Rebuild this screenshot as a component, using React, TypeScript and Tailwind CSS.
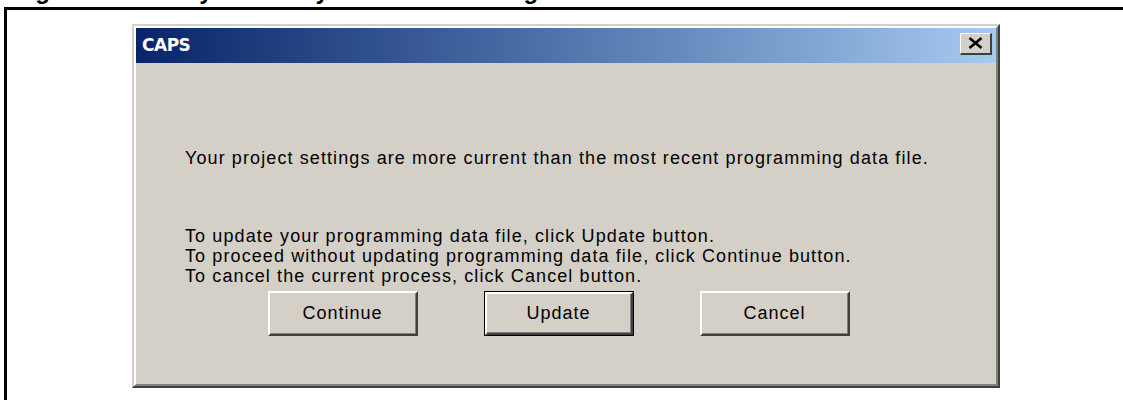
import React from 'react'

// Classic 3D push button used across the dialog
function DialogButton({ label, isDefault = false }: { label: string; isDefault?: boolean }) {
  const face = (
    <div className="w-full h-full border-t-[2px] border-l-[2px] border-t-white border-l-white border-r-[2px] border-b-[2px] border-r-[#404040] border-b-[#404040]">
      <div className="w-full h-full border-r-[1px] border-b-[1px] border-r-[#808080] border-b-[#808080] flex items-center justify-center text-black">
        {label}
      </div>
    </div>
  )

  if (isDefault) {
    return <div className="w-[150px] h-[45px] border-[1px] border-black bg-[#d4d0c8]">{face}</div>
  }
  return <div className="w-[150px] h-[45px] bg-[#d4d0c8]">{face}</div>
}

function CloseButton() {
  return (
    <div className="w-[32px] h-[22px] bg-[#d4d0c8] border-t-[1px] border-l-[1px] border-t-white border-l-white border-r-[2px] border-b-[2px] border-r-[#404040] border-b-[#404040] flex items-center justify-center">
      <svg width="15" height="12" viewBox="0 0 15 12">
        <path d="M1.5 1 L13.5 11 M13.5 1 L1.5 11" stroke="#000" strokeWidth="2.6" fill="none" />
      </svg>
    </div>
  )
}

export default function App() {
  return (
    <div className="w-[1123px] h-[400px] overflow-hidden bg-white font-['Liberation_Sans',Arial,sans-serif]">
      {/* caption line, clipped by the top of the page */}
      <div className="h-[7px] overflow-hidden">
        <p className="-mt-[21px] pl-[14px] text-[24px] leading-[24px] font-bold text-black whitespace-nowrap">
          Figure 5. Memory Summary and Status Dialog
        </p>
      </div>

      <div className="ml-[4px] w-[1300px] h-[500px] border-l-[3px] border-t-[3px] border-black pl-[125px] pt-[14px]">
        {/* dialog window */}
        <div className="w-[868px] h-[364px] bg-[#d4d0c8] border-[2px] border-t-[#d4d0c8] border-l-[#d4d0c8] border-r-[#404040] border-b-[#404040]">
          <div className="w-full h-full border-[2px] border-t-white border-l-white border-r-[#808080] border-b-[#808080] flex flex-col">
            <div className="h-[35px] flex items-center justify-between pl-[6px] pr-[4px] bg-gradient-to-r from-[#0a246a] to-[#a6caf0]">
              <span className="text-white font-bold text-[17px] font-['DejaVu_Sans',Verdana,sans-serif] tracking-[-0.5px]">CAPS</span>
              <div className="-mt-[4px]">
                <CloseButton />
              </div>
            </div>

            <div className="pl-[49px] pt-[85px] text-[18px] leading-[20px] tracking-[1.1px] text-black">
              <p>Your project settings are more current than the most recent programming data file.</p>
              <div className="mt-[58px]">
                <p>To update your programming data file, click Update button.</p>
                <p>To proceed without updating programming data file, click Continue button.</p>
                <p>To cancel the current process, click Cancel button.</p>
              </div>
            </div>

            <div className="mt-[5px] pl-[132px] flex gap-[66px] text-[18px] tracking-[1px]">
              <DialogButton label="Continue" />
              <DialogButton label="Update" isDefault />
              <DialogButton label="Cancel" />
            </div>
          </div>
        </div>
      </div>
    </div>
  )
}
